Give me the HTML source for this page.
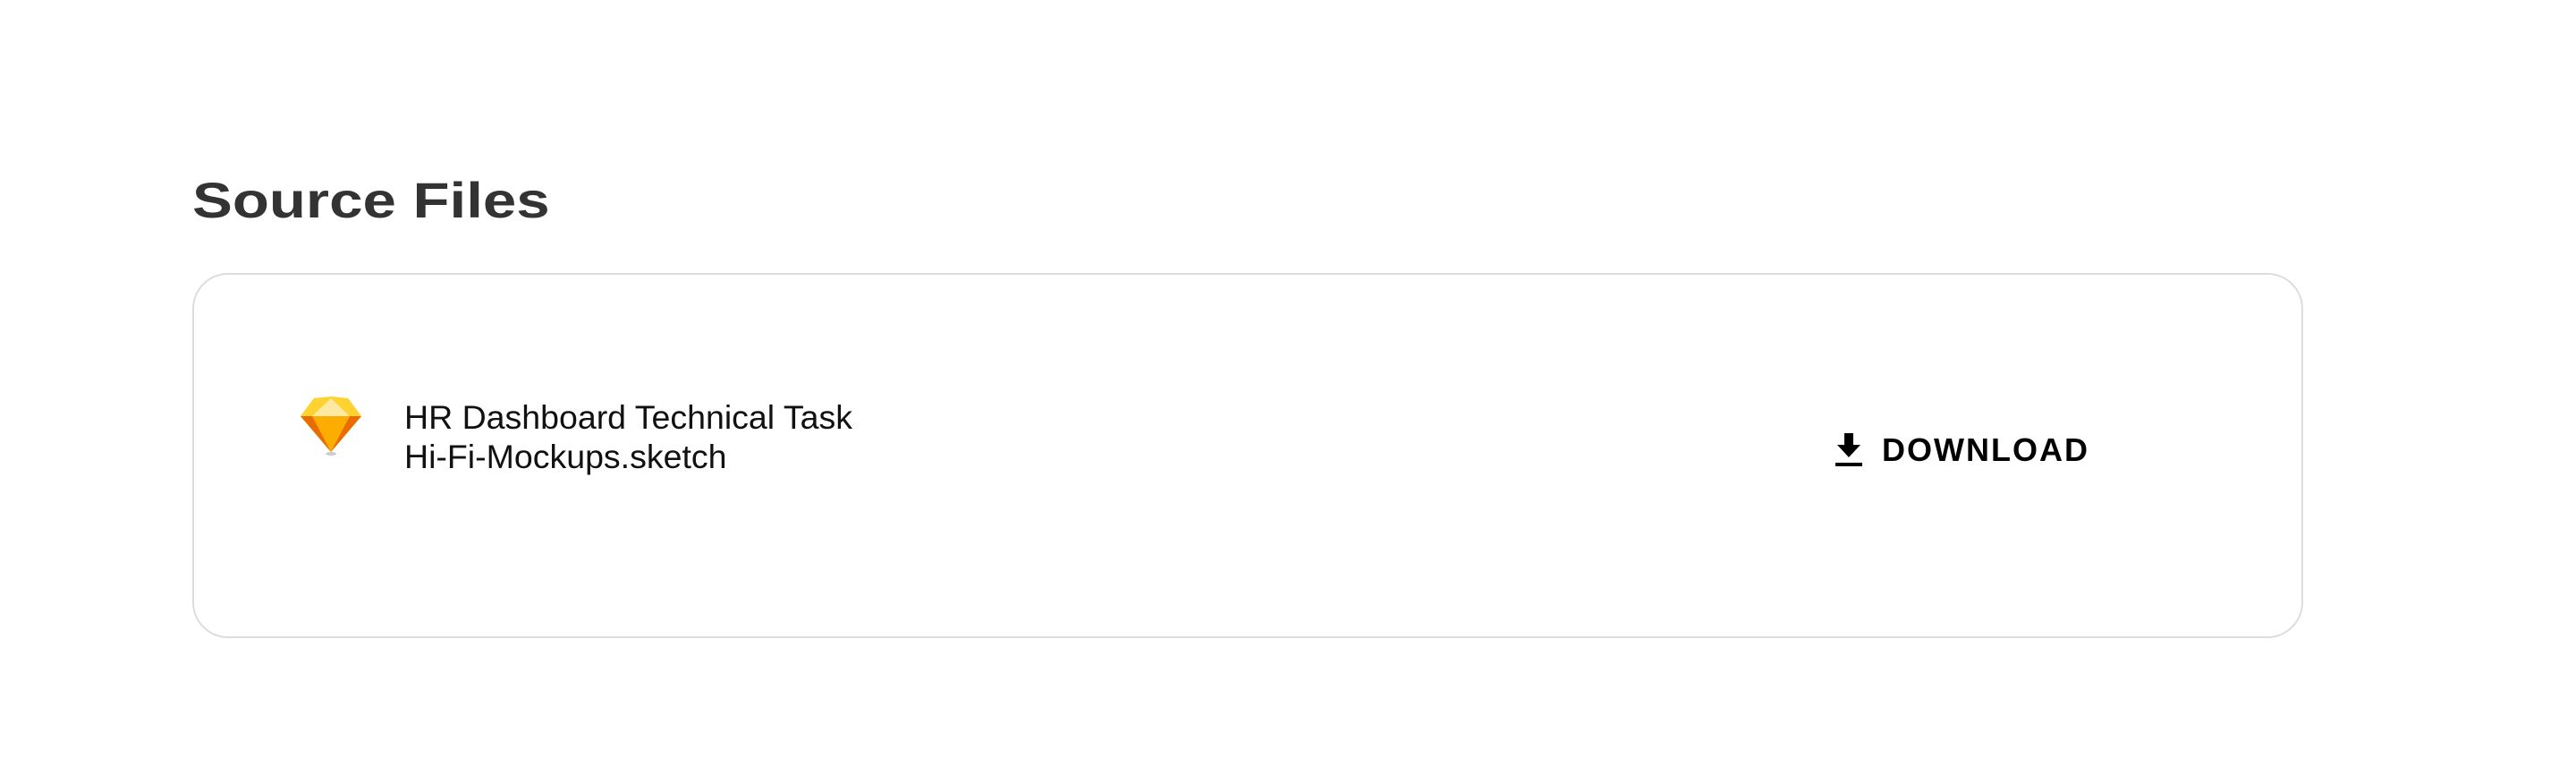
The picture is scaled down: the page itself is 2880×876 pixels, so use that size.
<!DOCTYPE html>
<html><head><meta charset="utf-8"><style>
html,body{margin:0;padding:0;background:#fff;width:2880px;height:876px;overflow:hidden;font-family:"Liberation Sans",sans-serif;}
h2{position:absolute;left:215px;top:189px;margin:0;font-size:56px;line-height:70px;font-weight:700;color:#333;transform-origin:left center;transform:scaleX(1.2);letter-spacing:0px;}
.card{position:absolute;left:215px;top:305px;width:2356px;height:404px;border:2px solid #dcdcdc;border-radius:40px;}
.icon{position:absolute;left:336px;top:443px;}
.name{position:absolute;left:452px;top:444px;font-size:37.5px;line-height:44px;color:#111;transform-origin:left top;transform:scaleX(1.0);}
.dl{position:absolute;left:2052px;top:483px;display:flex;align-items:center;}
.dl span{font-size:36px;font-weight:700;letter-spacing:2px;color:#000;margin-left:22px;line-height:40px;}
</style></head><body>
<h2>Source Files</h2>
<div class="card"></div>
<svg class="icon" width="68" height="66" viewBox="0 0 68 66">
<polygon points="15,2 53,2 68,22 34,62 0,22" fill="#fdb300"/>
<polygon points="0,22 68,22 34,62" fill="#ea6c00"/>
<polygon points="13,22 55,22 34,62" fill="#fdad00"/>
<polygon points="15,2 34,0 53,2 55,22 13,22" fill="#fdd231"/>
<polygon points="34,2 55,22 13,22" fill="#fee9a3"/>
<polygon points="15,2 13,22 0,22" fill="#fdd231"/>
<polygon points="53,2 55,22 68,22" fill="#fdd231"/>
<ellipse cx="34" cy="64" rx="6" ry="2" fill="#ccc"/>
</svg>
<div class="name">HR Dashboard Technical Task<br>Hi-Fi-Mockups.sketch</div>
<div class="dl"><svg width="30" height="38" viewBox="0 0 30 38"><path d="M10 0h10v13h8L15 27 2 13h8z" fill="#000"/><rect x="0" y="33" width="30" height="4" fill="#000"/></svg><span>DOWNLOAD</span></div>
</body></html>
